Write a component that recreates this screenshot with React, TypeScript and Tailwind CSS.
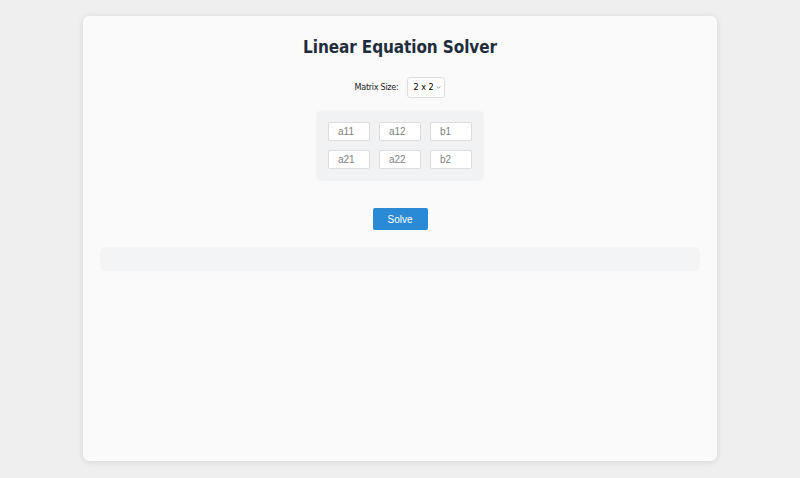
import React, { useState } from 'react';

const cells = [
  ['a11', 'a12', 'b1'],
  ['a21', 'a22', 'b2'],
];

export default function App() {
  const [size, setSize] = useState('2');

  return (
    <div className="min-h-[478px] w-full bg-[#efefef] pt-4 pb-4 font-['DejaVu_Sans_Condensed','DejaVu_Sans',sans-serif]">
      <div className="mx-auto w-[634px] h-[445px] bg-[#fafafa] rounded-md shadow-[0_1px_6px_rgba(0,0,0,0.12)] px-[17px] pt-[20px]">
        <h1 className="text-center text-[17px] font-bold text-[#1f2d3d] leading-[22px] tracking-[-0.1px]">Linear Equation Solver</h1>

        <div className="mt-[19px] flex items-center justify-center gap-[9px] text-[9px] tracking-[-0.3px] text-[#222]">
          <label htmlFor="size">Matrix Size:</label>
          <div className="relative">
            <select
              id="size"
              value={size}
              onChange={e => setSize(e.target.value)}
              className="appearance-none h-[21px] w-[38px] border border-[#ddd] rounded-[3px] bg-white pl-[5px] text-[9px] tracking-normal text-black outline-none"
            >
              <option value="2">2 x 2</option>
              <option value="3">3 x 3</option>
            </select>
            <svg className="absolute right-[4px] top-[9px] w-[5px] h-[3px] pointer-events-none" viewBox="0 0 6 4" fill="none" stroke="#666" strokeWidth="0.9">
              <path d="M0.5 0.5 L3 3 L5.5 0.5" />
            </svg>
          </div>
        </div>

        <div className="mt-[12px] flex justify-center">
          <div className="bg-[#f1f2f4] rounded-md p-3 grid grid-cols-3 gap-[9px]">
            {cells.flat().map(c => (
              <input
                key={c}
                placeholder={c}
                className="w-[42px] h-[19px] border border-[#dcdcdc] rounded-[2px] bg-white px-[9px] text-[10px] font-['Liberation_Sans',sans-serif] text-[#333] placeholder:text-[#808080] outline-none"
              />
            ))}
          </div>
        </div>

        <div className="mt-[27px] flex justify-center">
          <button className="w-[55px] h-[22px] bg-[#2b8ad6] rounded-[2px] text-white text-[10px] font-['Liberation_Sans',sans-serif]">Solve</button>
        </div>

        <div className="mt-[17px] h-[24px] bg-[#f3f4f6] rounded-md" />
      </div>
    </div>
  );
}
